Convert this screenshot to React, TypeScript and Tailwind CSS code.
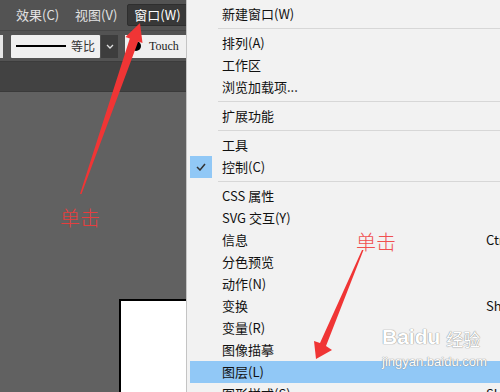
import React from "react";

type Item = { label?: string; key?: string; checked?: boolean; active?: boolean; sep?: boolean };

const items: Item[] = [
  { label: "新建窗口(W)" },
  { sep: true },
  { label: "排列(A)" },
  { label: "工作区" },
  { label: "浏览加载项..." },
  { sep: true },
  { label: "扩展功能" },
  { sep: true },
  { label: "工具" },
  { label: "控制(C)", checked: true },
  { sep: true },
  { label: "CSS 属性" },
  { label: "SVG 交互(Y)" },
  { label: "信息", key: "Ctrl+F8" },
  { label: "分色预览" },
  { label: "动作(N)" },
  { label: "变换", key: "Shift+F8" },
  { label: "变量(R)" },
  { label: "图像描摹" },
  { label: "图层(L)", active: true },
  { label: "图形样式(S)", key: "Shift+F5" },
];

function MenuRow({ item }: { item: Item }) {
  if (item.sep) {
    return (
      <div className="h-[7px] flex items-center pl-[31px]">
        <div className="h-px w-full bg-[#d7d7d7]" />
      </div>
    );
  }
  return (
    <div className={`h-[22px] flex items-center ml-[3px] ${item.active ? "bg-[#91c8f6]" : ""}`}>
      <div className={`shrink-0 w-[22px] h-[22px] flex items-center justify-center ${item.checked ? "bg-[#91c8f6]" : ""}`}>
        {item.checked && (
          <svg width="10" height="8" viewBox="0 0 10 8">
            <path d="M1 4 L4 7 L9 1" fill="none" stroke="#333" strokeWidth="1.5" />
          </svg>
        )}
      </div>
      <span className="shrink-0 ml-[10px] w-[264px] text-[13px] text-[#111]">{item.label}</span>
      {item.key && <span className="shrink-0 text-[13px] text-[#111]">{item.key}</span>}
    </div>
  );
}

export default function App() {
  return (
    <div
      className="relative w-[500px] h-[392px] overflow-hidden flex"
      style={{ fontFamily: '"Microsoft YaHei", "Noto Sans CJK SC", "Noto Sans", sans-serif' }}
    >
      {/* Illustrator window */}
      <div className="w-[186px] shrink-0 flex flex-col bg-[#616161]">
        <div className="h-[31px] bg-[#535353] border-b border-[#474747] flex items-center text-[13px] text-[#e2e2e2] whitespace-nowrap overflow-hidden">
          <span className="shrink-0 ml-[16px]">效果(C)</span>
          <span className="shrink-0 ml-[16px]">视图(V)</span>
          <span className="shrink-0 ml-[10px] h-[22px] px-[6px] flex items-center bg-[#383838] border border-[#2e2e2e] rounded-[2px] text-white">
            窗口(W)
          </span>
        </div>
        <div className="h-[31px] bg-[#535353] border-b border-[#3c3c3c] flex items-center">
          <div className="w-[3px] h-[23px] bg-[#e6e6e6]" />
          <div className="ml-[8px] w-[89px] h-[23px] bg-[#f0f0f0] flex items-center rounded-[1px]">
            <div className="ml-[5px] w-[50px] h-[2px] bg-black" />
            <span className="ml-[5px] text-[12px] text-[#333] whitespace-nowrap">等比</span>
          </div>
          <div className="ml-[1px] w-[17px] h-[23px] bg-[#3d3d3d] flex items-center justify-center">
            <svg width="8" height="5" viewBox="0 0 8 5">
              <path d="M1 1 L4 4 L7 1" fill="none" stroke="#e0e0e0" strokeWidth="1.3" />
            </svg>
          </div>
          <div className="ml-[7px] flex-1 h-[23px] bg-[#f0f0f0] flex items-center overflow-hidden">
            <div className="shrink-0 ml-[6px] w-[10px] h-[10px] rounded-full bg-black" />
            <span className="ml-[8px] text-[12px] text-[#222]" style={{ fontFamily: '"Liberation Serif", serif' }}>
              Touch
            </span>
          </div>
        </div>
        <div className="h-[30px] bg-[#424242] border-b border-[#3a3a3a]" />
        <div className="flex-1 pl-[119px] pt-[207px]">
          <div className="h-full bg-white border-l-2 border-t-2 border-black" />
        </div>
      </div>

      {/* Window menu */}
      <div className="flex-1 bg-[#f2f2f2] border-l border-[#c4c4c4] pt-[3px] overflow-hidden whitespace-nowrap">
        {items.map((it, i) => (
          <MenuRow key={i} item={it} />
        ))}
      </div>

      {/* Watermark */}
      <div
        className="absolute left-[382px] top-[326px] text-white leading-none pointer-events-none"
        style={{ textShadow: "0 0 1px #8a8a8a, 0 0 1px #8a8a8a" }}
      >
        <div className="flex items-end gap-[6px]">
          <span className="text-[21px] font-bold" style={{ fontFamily: "'Liberation Sans', sans-serif" }}>Baidu</span>
          <span className="text-[17px]">经验</span>
        </div>
        <div className="mt-[8px] text-[13px]" style={{ fontFamily: "'Liberation Sans', sans-serif" }}>jingyan.baidu.com</div>
      </div>

      {/* Annotations */}
      <svg className="absolute inset-0 pointer-events-none" width="500" height="392">
        <polygon points="80,194 129.8,38.5 125.5,37 140,23 142.5,43 138.2,41.5 81.5,194" fill="#f03535" />
        <polygon points="362,250 363.5,250 326,346 332,350 316,359 314,341 320,343" fill="#f03535" />
      </svg>
      <span className="absolute left-[60px] top-[203px] text-[20px] font-light text-[#e63e3e] pointer-events-none">单击</span>
      <span className="absolute left-[356px] top-[227px] text-[20px] font-light text-[#f05050] pointer-events-none">单击</span>
    </div>
  );
}
